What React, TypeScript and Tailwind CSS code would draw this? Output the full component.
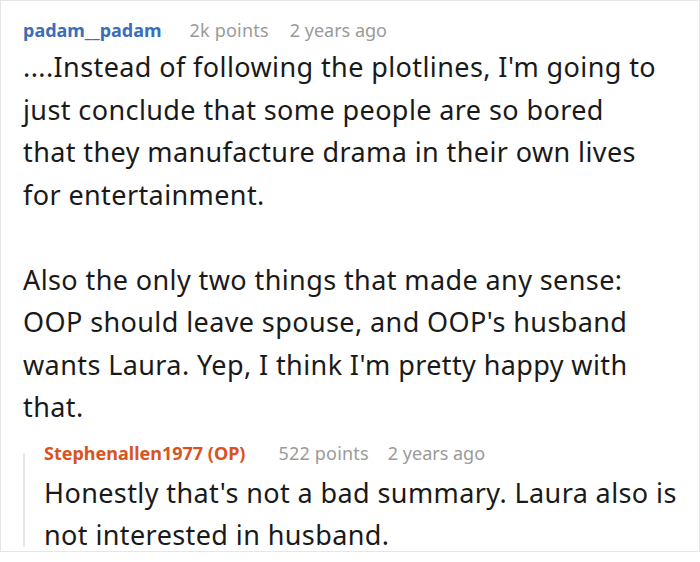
import React from "react";

export default function App() {
  return (
    <div className="w-[700px] h-[562px] bg-white" style={{ fontFamily: '"Noto Sans", sans-serif' }}>
      <div className="w-[700px] h-[552px] border border-[#e6e6e6] pl-[22px] pt-[15px]">
        <div className="flex items-baseline text-[18px] leading-[28px]">
          <span className="font-bold text-[#3b6eb8]">padam__padam</span>
          <span className="ml-[28px] tracking-[0.2px] text-[#9a9a9a]">2k points</span>
          <span className="ml-[21px] text-[#9a9a9a]">2 years ago</span>
        </div>
        <div className="text-[27px] leading-[42.5px] tracking-[0.4px] text-[#1a1a1a] mt-[2px] w-[670px]">
          <p>
            ....Instead of following the plotlines, I'm going to<br />
            just conclude that some people are so bored<br />
            that they manufacture drama in their own lives<br />
            for entertainment.
          </p>
          <p className="mt-[42.5px]">
            Also the only two things that made any sense:<br />
            OOP should leave spouse, and OOP's husband<br />
            wants Laura. Yep, I think I'm pretty happy with<br />
            that.
          </p>
        </div>
        <div className="mt-[10.5px] flex">
          <div className="w-[2px] bg-[#e6e6e6] mt-[14px] mb-[10px]" />
          <div className="pl-[19px]">
            <div className="flex items-baseline text-[18px] leading-[28px]">
              <span className="font-bold text-[#d9531e]">Stephenallen1977 (OP)</span>
              <span className="ml-[33px] tracking-[0.2px] text-[#9a9a9a]">522 points</span>
              <span className="ml-[19px] text-[#9a9a9a]">2 years ago</span>
            </div>
            <div className="text-[27px] leading-[42.5px] tracking-[0.4px] text-[#1a1a1a] mt-[4.5px] w-[650px]">
              <p>
                Honestly that's not a bad summary. Laura also is<br />
                not interested in husband.
              </p>
            </div>
          </div>
        </div>
      </div>
    </div>
  );
}
